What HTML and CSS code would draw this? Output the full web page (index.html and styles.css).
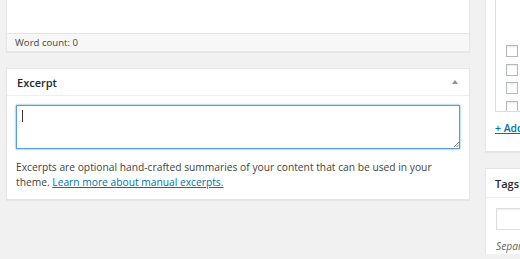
FILE: index.html
```html
<!DOCTYPE html>
<html>
<head>
<meta charset="utf-8">
<link rel="stylesheet" href="styles.css">
</head>
<body>
<div class="wrap">
  <div class="main">
    <div class="editor"></div>
    <div class="status">Word count: 0</div>
    <div class="postbox excerpt">
      <div class="hdr">
        <h2>Excerpt</h2>
        <span class="toggle"></span>
      </div>
      <div class="inside">
        <div class="ta-wrap">
          <textarea class="ta" aria-label="Excerpt"></textarea>
          <span class="caret"></span>
          <svg class="grip" width="6" height="6" viewBox="0 0 6 6"><path d="M1 6 L6 1 M3.5 6 L6 3.5" stroke="#777" stroke-width="0.9"/></svg>
        </div>
        <p class="note">Excerpts are optional hand-crafted summaries of your content that can be used in your theme. <a href="#">Learn more about manual excerpts.</a></p>
      </div>
    </div>
  </div>
  <div class="side">
    <div class="catbox">
      <div class="catlist">
        <div class="row"><span class="cb"></span></div>
        <div class="row"><span class="cb"></span></div>
        <div class="row"><span class="cb"></span></div>
        <div class="row"><span class="cb"></span></div>
      </div>
      <h4 class="addnew"><a href="#">+ Add New Category</a></h4>
    </div>
    <div class="tagbox">
      <div class="hdr tags-hdr"><h2>Tags</h2></div>
      <div class="tag-inside">
        <div class="taginput"></div>
        <p class="howto">Separate tags with commas</p>
      </div>
    </div>
  </div>
</div>
</body>
</html>
```

FILE: styles.css
```css
html, body {
  margin: 0;
  height: 100%;
  overflow: hidden;
}
body {
  background: #f1f1f1;
  font-family: "Open Sans", "DejaVu Sans", sans-serif;
  font-size: 10.25px;
  color: #444;
}
.wrap {
  display: flex;
  gap: 15px;
  padding-left: 6px;
}
.main {
  width: 464px;
  flex: none;
}
.editor {
  height: 33px;
  background: #fff;
  border-left: 1px solid #e5e5e5;
  border-right: 1px solid #e5e5e5;
}
.status {
  height: 17px;
  line-height: 17px;
  border: 1px solid #e5e5e5;
  background: #f7f7f7;
  padding-left: 8px;
  font-size: 9.6px;
  color: #444;
  box-shadow: 0 1px 1px rgba(0,0,0,.04);
}
.postbox {
  margin-top: 16px;
  background: #fff;
  border: 1px solid #e5e5e5;
  box-shadow: 0 1px 1px rgba(0,0,0,.04);
}
.hdr {
  height: 26px;
  border-bottom: 1px solid #eee;
  display: flex;
  align-items: center;
  justify-content: space-between;
  padding: 0 10px 0 10px;
}
.hdr h2 {
  margin: 0;
  font-size: 11px;
  font-weight: 600;
  color: #23282d;
}
.toggle {
  width: 0;
  height: 0;
  border-left: 3.5px solid transparent;
  border-right: 3.5px solid transparent;
  border-bottom: 4px solid #8c8f94;
  margin-right: 1px;
}
.inside {
  padding: 9px 8px 9px 9px;
}
.ta-wrap {
  position: relative;
  height: 44px;
}
.ta {
  display: block;
  box-sizing: border-box;
  width: 444px;
  height: 44px;
  margin: 0;
  border: 1px solid #5b9dd9;
  box-shadow: 0 0 2px rgba(30,140,190,.8);
  border-radius: 0;
  resize: none;
  outline: none;
  background: #fff;
}
.caret {
  position: absolute;
  left: 6px;
  top: 5px;
  width: 1px;
  height: 12px;
  background: #333;
}
.grip {
  position: absolute;
  right: 2px;
  bottom: 2px;
}
.note {
  margin: 11px 0 0;
  line-height: 15px;
}
.note a, .addnew a {
  color: #0073aa;
  text-decoration: underline;
}
.side {
  flex: 1;
  min-width: 0;
}
.catbox {
  height: 151px;
  background: #fff;
  border-left: 1px solid #e5e5e5;
  border-bottom: 1px solid #e5e5e5;
  padding-left: 9px;
  box-shadow: 0 1px 1px rgba(0,0,0,.04);
  white-space: nowrap;
  overflow: hidden;
}
.catlist {
  height: 112px;
  box-sizing: border-box;
  border-left: 1px solid #ddd;
  border-bottom: 1px solid #ddd;
  padding: 45px 0 0 10px;
  overflow: hidden;
}
.row {
  height: 18.7px;
}
.cb {
  display: block;
  box-sizing: border-box;
  width: 12px;
  height: 12px;
  border: 1px solid #b4b9be;
  background: #fff;
  box-shadow: inset 0 1px 2px rgba(0,0,0,.1);
}
.addnew {
  margin: 9px 0 0;
  font-size: 10.4px;
  font-weight: 600;
  line-height: 15px;
}
.tagbox {
  margin-top: 16px;
  background: #fff;
  border-left: 1px solid #e5e5e5;
  border-top: 1px solid #e5e5e5;
  white-space: nowrap;
  overflow: hidden;
}
.tags-hdr {
  height: 28px;
  padding-left: 9px;
}
.tag-inside {
  padding: 10px 0 0 10px;
}
.taginput {
  height: 20px;
  width: 200px;
  border: 1px solid #ddd;
  box-shadow: inset 0 1px 2px rgba(0,0,0,.07);
}
.howto {
  margin: 9px 0 0;
  font-style: italic;
  color: #666;
  line-height: 15px;
}
```
